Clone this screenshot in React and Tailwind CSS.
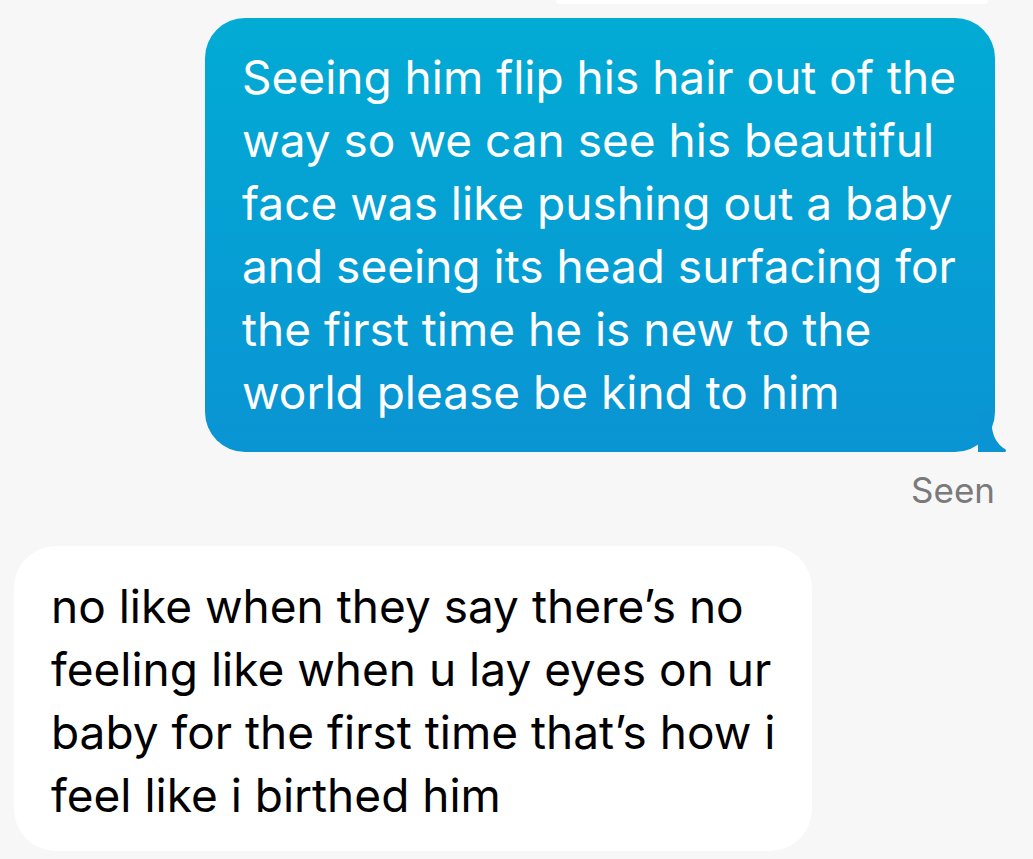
export default function App() {
  const sent = [
    "Seeing him flip his hair out of the",
    "way so we can see his beautiful",
    "face was like pushing out a baby",
    "and seeing its head surfacing for",
    "the first time he is new to the",
    "world please be kind to him",
  ];
  const received = [
    "no like when they say there’s no",
    "feeling like when u lay eyes on ur",
    "baby for the first time that’s how i",
    "feel like i birthed him",
  ];

  return (
    <div className="w-[1033px] h-[859px] overflow-hidden bg-[#f7f7f7] font-['Inter','Liberation_Sans',sans-serif]">
      {/* previous bubble, cut off at top */}
      <div className="flex justify-end pr-[45px]">
        <div className="w-[432px] h-[4px] bg-white rounded-b-[30px]" />
      </div>

      {/* sent */}
      <div className="flex justify-end pr-[38px] mt-[14px]">
        <div className="relative">
          <div className="w-[790px] h-[434px] rounded-[40px] bg-gradient-to-b from-[#02abd4] to-[#0a94d3] pl-[37px] pt-[28px] text-white text-[46px] leading-[63px]">
            {sent.map((l) => (
              <div key={l} className="whitespace-nowrap">{l}</div>
            ))}
          </div>
          <svg className="absolute right-[-13px] bottom-0" width="30" height="40" viewBox="0 0 30 40">
            <path d="M0 0 L13 0 C13 20 16 30 27 37 C29 39 28 40 26 40 L0 40 Z" fill="#0a94d3" />
          </svg>
        </div>
      </div>

      <div className="flex justify-end pr-[38px] mt-[18px] text-[35px] leading-[40px] text-[#7a7a7a]">
        Seen
      </div>

      {/* received */}
      <div className="pl-[14px] mt-[36px]">
        <div className="w-[798px] h-[305px] rounded-[42px] bg-white pl-[37px] pt-[29px] text-black text-[46px] leading-[63px]">
          {received.map((l) => (
            <div key={l} className="whitespace-nowrap">{l}</div>
          ))}
        </div>
      </div>
    </div>
  );
}
